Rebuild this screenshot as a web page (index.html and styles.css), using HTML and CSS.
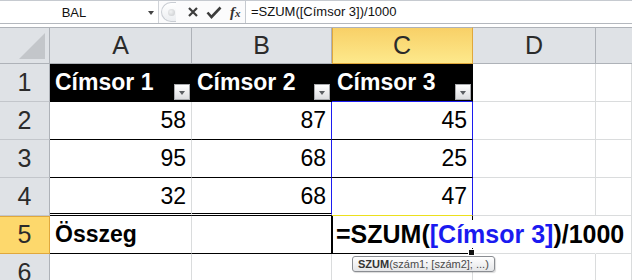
FILE: index.html
```html
<!DOCTYPE html>
<html lang="hu">
<head>
    <meta charset="UTF-8">
    <title>Munkalap</title>
    <link rel="stylesheet" href="styles.css">
</head>
<body>
    <div class="formula-bar">
        <div class="name-box">
            <span class="name">BAL</span>
            <span class="name-arrow"></span>
        </div>
        <div class="fx-buttons">
            <span class="knob"><span class="knob-dot"></span></span>
            <svg class="btn-icon" width="12" height="12" viewBox="0 0 12 12">
                <path d="M2 2 L10 10 M10 2 L2 10" stroke="#3c3c3c" stroke-width="2.2" fill="none"/>
            </svg>
            <svg class="btn-icon" width="16" height="13" viewBox="0 0 16 13">
                <path d="M1.5 6.5 L5.5 11 L14.5 1.5" stroke="#3c3c3c" stroke-width="2.6" fill="none"/>
            </svg>
            <span class="fx">f<span class="fx-x">x</span></span>
        </div>
        <div class="formula-input">=SZUM([Címsor 3])/1000</div>
    </div>

    <div class="sheet">
        <!-- column headers -->
        <div class="corner">
            <svg width="26" height="26" viewBox="0 0 26 26"><path d="M26 0 L26 26 L0 26 Z" fill="#c3c6ca"/></svg>
        </div>
        <div class="col-head">A</div>
        <div class="col-head">B</div>
        <div class="col-head active">C</div>
        <div class="col-head">D</div>
        <div class="col-head last"></div>

        <!-- row 1 -->
        <div class="row-head">1</div>
        <div class="cell th">Címsor 1<span class="filter"></span></div>
        <div class="cell th">Címsor 2<span class="filter"></span></div>
        <div class="cell th th-ref">Címsor 3<span class="filter"></span></div>
        <div class="cell"></div>
        <div class="cell"></div>

        <!-- row 2 -->
        <div class="row-head">2</div>
        <div class="cell num line">58</div>
        <div class="cell num line ref-left">87</div>
        <div class="cell num line ref-right">45</div>
        <div class="cell"></div>
        <div class="cell"></div>

        <!-- row 3 -->
        <div class="row-head">3</div>
        <div class="cell num line">95</div>
        <div class="cell num line ref-left">68</div>
        <div class="cell num line ref-right">25</div>
        <div class="cell"></div>
        <div class="cell"></div>

        <!-- row 4 -->
        <div class="row-head">4</div>
        <div class="cell num total-top">32</div>
        <div class="cell num total-top ref-left">68</div>
        <div class="cell num ref-right ref-bottom">47</div>
        <div class="cell"></div>
        <div class="cell"></div>

        <!-- row 5 -->
        <div class="row-head active">5</div>
        <div class="cell bold line">Összeg</div>
        <div class="cell line edit-left"></div>
        <div class="cell editing">
            <span class="editor">=SZUM(<span class="ref">[Címsor 3]</span>)/1000</span>
            <span class="fill-handle"></span>
            <div class="tooltip"><b>SZUM</b>(szám1; [szám2]; ...)</div>
        </div>
        <div class="cell no-grid"></div>
        <div class="cell"></div>

        <!-- row 6 -->
        <div class="row-head">6</div>
        <div class="cell"></div>
        <div class="cell"></div>
        <div class="cell"></div>
        <div class="cell"></div>
        <div class="cell"></div>
    </div>
</body>
</html>
```

FILE: styles.css
```css
body {
    margin: 0;
    width: 632px;
    height: 280px;
    overflow: hidden;
    background-color: white;
    font-family: 'Liberation Sans', Arial, sans-serif;
    color: #000;
}

/* formula bar */

.formula-bar {
    display: flex;
    height: 24px;
    box-sizing: border-box;
    border-top: 1px solid #c6cad0;
    border-bottom: 1px solid #b4b8be;
    margin-bottom: 3px;
    font-size: 13px;
}

.name-box {
    width: 158px;
    display: flex;
    align-items: center;
    border-right: 1px solid #d0d3d8;
}

.name {
    flex: 1;
    text-align: center;
    color: #111;
}

.name-arrow {
    width: 0;
    height: 0;
    border-left: 3.5px solid transparent;
    border-right: 3.5px solid transparent;
    border-top: 4px solid #444;
    margin-right: 4px;
    margin-top: 2px;
}

.fx-buttons {
    width: 86px;
    display: flex;
    align-items: center;
    background-color: #fbfbfc;
}

.knob {
    width: 15px;
    height: 20px;
    box-sizing: border-box;
    margin-left: 2px;
    border: 1px solid #c9cdd3;
    border-right: none;
    border-radius: 10px 0 0 10px;
    background: linear-gradient(#ffffff, #eceef1);
    display: flex;
    align-items: center;
    justify-content: flex-end;
}

.knob-dot {
    width: 7px;
    height: 7px;
    border-radius: 50%;
    background: radial-gradient(circle at 40% 40%, #f2f3f4, #c6c8cb);
    margin-right: 1px;
}

.btn-icon {
    margin-left: 11px;
}

.btn-icon + .btn-icon {
    margin-left: 7px;
}

.fx {
    margin-left: 8px;
    font-family: 'Liberation Serif', serif;
    font-style: italic;
    font-weight: bold;
    font-size: 15px;
    color: #333;
}

.fx-x {
    font-size: 11px;
}

.formula-input {
    flex: 1;
    border-left: 1px solid #c6cad0;
    padding-left: 5px;
    line-height: 22px;
    color: #111;
}

/* sheet grid */

.sheet {
    display: grid;
    grid-template-columns: 50px 142px 140px 141px 123px 1fr;
    grid-template-rows: 37px repeat(5, 38px) 38px;
}

.corner,
.col-head,
.row-head {
    background-color: #dfe2e6;
    box-sizing: border-box;
    color: #2b2b2b;
    font-size: 25px;
    display: flex;
    align-items: center;
    justify-content: center;
}

.corner {
    border-top: 1px solid #aeb2b8;
    border-right: 1px solid #aeb2b8;
    border-bottom: 1px solid #aeb2b8;
    align-items: flex-end;
    justify-content: flex-end;
    padding: 0 4px 4px 0;
}

.col-head {
    border-top: 1px solid #aeb2b8;
    border-right: 1px solid #aeb2b8;
    border-bottom: 1px solid #aeb2b8;
}

.col-head.last {
    border-right: none;
}

.col-head.active {
    background: linear-gradient(#f8d067, #fde98c);
    border-right-color: #e0a83c;
    border-bottom-color: #e0a83c;
    box-shadow: inset 1px 0 0 #e0a83c;
}

.row-head {
    border-right: 1px solid #aeb2b8;
    border-bottom: 1px solid #c3c6cb;
}

.row-head.active {
    background-color: #fdd86c;
    border-right-color: #e0a83c;
    border-bottom-color: #e0a83c;
    box-shadow: inset 0 1px 0 #e0a83c;
}

.cell {
    box-sizing: border-box;
    border-right: 1px solid #dadcdd;
    border-bottom: 1px solid #dadcdd;
    font-size: 23px;
    line-height: 37px;
    padding: 0 5px;
    white-space: nowrap;
}

/* table */

.th {
    position: relative;
    background-color: #000;
    color: white;
    font-weight: bold;
    border-right-color: #000;
    border-bottom-color: #000;
}

.th-ref {
    border-bottom-color: #1c1cf0;
}

.filter {
    position: absolute;
    right: 1px;
    bottom: 1px;
    width: 16px;
    height: 16px;
    box-sizing: border-box;
    border: 1px solid #a9abae;
    background: linear-gradient(#ffffff, #dcdde0);
}

.filter::after {
    content: "";
    position: absolute;
    left: 4px;
    top: 6px;
    border-left: 3.5px solid transparent;
    border-right: 3.5px solid transparent;
    border-top: 4px solid #5c5f63;
}

.num {
    text-align: right;
}

.bold {
    font-weight: bold;
}

.line {
    border-bottom-color: #000;
}

.total-top {
    border-bottom: 3px double #000;
}

.ref-left {
    border-right-color: #1c1cf0;
}

.ref-right {
    border-right-color: #1c1cf0;
    border-bottom-color: #000;
}

.ref-bottom {
    border-bottom-color: #ece01e;
}

.edit-left {
    border-right-color: #000;
}

.editing {
    position: relative;
    z-index: 2;
    overflow: visible;
    border-left: 1px solid #000;
    border-right-color: #000;
    border-bottom-color: #000;
    padding-left: 3px;
    font-weight: bold;
}

.editor {
    background-color: white;
    padding-right: 6px;
    font-size: 25px;
}

.ref {
    color: #1a1af0;
}

.fill-handle {
    position: absolute;
    right: -3px;
    bottom: -3px;
    width: 5px;
    height: 5px;
    background-color: #111;
    border: 1px solid white;
}

.tooltip {
    position: absolute;
    left: 19px;
    top: 40px;
    height: 16px;
    box-sizing: border-box;
    padding: 0 5px;
    border: 1px solid #8a8d92;
    border-radius: 3px;
    background: linear-gradient(#ffffff, #e5e6e8);
    font-size: 11px;
    font-weight: normal;
    line-height: 14px;
    color: #4a4a4a;
    box-shadow: 1px 1px 1px rgba(0,0,0,0.15);
}

.tooltip b {
    color: #333;
}

.no-grid {
    border-right-color: transparent;
}
```
